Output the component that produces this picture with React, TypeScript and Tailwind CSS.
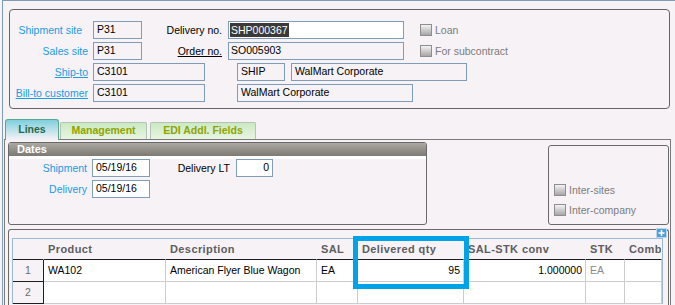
import React from "react";

type Child = { children?: React.ReactNode; className?: string };

function Label({ children, className = "" }: Child) {
  return <span className={`text-right leading-[18px] whitespace-nowrap ${className}`}>{children}</span>;
}

function Field({ children, className = "" }: Child) {
  return (
    <div className={`h-[18px] border border-[#7f9db9] flex items-center text-black whitespace-nowrap overflow-hidden ${className}`}>
      {children}
    </div>
  );
}

function Check({ label, className = "" }: { label: string; className?: string }) {
  return (
    <div className={`flex items-center gap-[3px] text-[#7c7c7c] ${className}`}>
      <span className="w-[12px] h-[12px] border border-[#8e8e8e] bg-linear-to-b from-[#f4f4f4] to-[#a6a6a6]" />
      <span className="leading-[12px]">{label}</span>
    </div>
  );
}

const head = "h-[21px] border-b border-r border-b-[#1e1e1e] border-r-transparent bg-[#f6f2f6] flex items-center pl-[4px] font-bold text-[11px] tracking-[0.4px] text-[#5e5e5e] whitespace-nowrap overflow-hidden relative after:absolute after:right-[-1px] after:top-[2px] after:bottom-0 after:w-px after:bg-[#1e1e1e]";
const num = "h-[22px] border-b border-r border-[#1e1e1e] bg-[#f6f2f6] flex items-center justify-center text-[#6a6a6a]";
const cell = "h-[22px] border-b border-r border-[#cccccc] bg-white flex items-center px-[4px] whitespace-nowrap overflow-hidden";

export default function App() {
  return (
    <div className="w-[675px] h-[305px] overflow-hidden bg-[#f6f2f6] font-['Liberation_Sans',Arial,sans-serif] text-[10.5px] relative">
      <div className="ml-[2px] w-[673px] h-full border-l border-t border-[#7f9db9] flex flex-col">
        {/* header panel */}
        <div className="mt-[8px] ml-[6px] w-[661px] h-[100px] shrink-0 border border-[#646464] rounded-[4px] pt-[11px] flex flex-col gap-[3px]">
          <div className="flex items-center h-[18px]">
            <Label className="w-[78px] pr-[6px] text-[#1a9be6]">Shipment site</Label>
            <Field className="ml-[5px] w-[49px] pl-[3px]">P31</Field>
            <Label className="w-[80px] text-black">Delivery no.</Label>
            <Field className="ml-[6px] w-[176px] bg-white pl-[1px]">
              <span className="bg-[#3a3a3a] text-white px-px leading-[14px]">SHP000367</span>
            </Field>
            <Check className="ml-[16px]" label="Loan" />
          </div>
          <div className="flex items-center h-[18px]">
            <Label className="w-[78px] text-[#1a9be6]">Sales site</Label>
            <Field className="ml-[5px] w-[49px] pl-[3px]">P31</Field>
            <Label className="w-[80px] text-black underline">Order no.</Label>
            <Field className="ml-[6px] w-[176px] pl-[2px]">SO005903</Field>
            <Check className="ml-[16px]" label="For subcontract" />
          </div>
          <div className="flex items-center h-[18px]">
            <Label className="w-[78px] text-[#1a9be6] underline">Ship-to</Label>
            <Field className="ml-[5px] w-[112px] pl-[3px]">C3101</Field>
            <Field className="ml-[32px] w-[48px] pl-[3px]">SHIP</Field>
            <Field className="ml-[6px] w-[176px] pl-[3px]">WalMart Corporate</Field>
          </div>
          <div className="flex items-center h-[18px]">
            <Label className="w-[78px] text-[#1a9be6] underline">Bill-to customer</Label>
            <Field className="ml-[5px] w-[112px] pl-[3px]">C3101</Field>
            <Field className="ml-[32px] w-[176px] pl-[3px]">WalMart Corporate</Field>
          </div>
        </div>

        {/* tabs */}
        <div className="mt-[10px] ml-[2px] h-[20px] shrink-0 flex items-end relative z-10">
          <div className="h-[21px] w-[54px] -mb-px border border-b-0 border-[#5aa88c] rounded-t-[3px] bg-linear-to-b from-[#7ccfdc] to-[#f6f2f6] flex items-center justify-center font-bold text-[#1d6b4c]">
            Lines
          </div>
          <div className="ml-[1px] h-[17px] w-[87px] border border-b-0 border-[#b4c4b4] rounded-t-[2px] bg-linear-to-b from-[#cbe9c2] to-[#e8f5e2] flex items-center justify-center font-bold text-[#8ea400]">
            Management
          </div>
          <div className="ml-[3px] h-[17px] w-[106px] border border-b-0 border-[#b4c4b4] rounded-t-[2px] bg-linear-to-b from-[#cbe9c2] to-[#e8f5e2] flex items-center justify-center font-bold text-[#8ea400]">
            EDI Addl. Fields
          </div>
        </div>

        {/* tab body */}
        <div className="ml-[1px] w-[667px] flex-1 border-l border-t border-r border-[#7a7a7a]">
          <div className="mt-[2px] ml-[3px] flex items-end">
            <div className="w-[419px] h-[83px] border border-[#6a6a6a] rounded-[3px] overflow-hidden flex flex-col">
              <div className="h-[13px] bg-linear-to-b from-[#aaaaa2] to-[#7e7875] text-white font-bold text-[11px] leading-[13px] pl-[8px]">
                Dates
              </div>
              <div className="h-[3px] bg-white" />
              <div className="flex flex-col gap-[3px]">
                <div className="flex items-center h-[18px]">
                  <Label className="w-[78px] text-[#1a9be6]">Shipment</Label>
                  <Field className="ml-[5px] w-[58px] bg-white pl-[3px]">05/19/16</Field>
                  <Label className="w-[80px] text-black">Delivery LT</Label>
                  <Field className="ml-[6px] w-[37px] bg-white justify-end pr-[3px]">0</Field>
                </div>
                <div className="flex items-center h-[18px]">
                  <Label className="w-[78px] text-[#1a9be6]">Delivery</Label>
                  <Field className="ml-[5px] w-[58px] bg-white pl-[3px]">05/19/16</Field>
                </div>
              </div>
            </div>
            <div className="ml-[121px] w-[121px] h-[80px] border border-[#6a6a6a] rounded-[3px] flex flex-col justify-end gap-[8px] pb-[8px] pl-[5px]">
              <Check label="Inter-sites" />
              <Check label="Inter-company" />
            </div>
          </div>

          {/* lines grid */}
          <div className="mt-[4px] ml-[3px] w-[661px] h-[90px] border-l border-t border-r border-[#6a6a6a] rounded-t-[3px] relative">
            <svg className="absolute right-[1px] top-[-2px]" width="11" height="10" viewBox="0 0 11 10">
              <rect x="0.5" y="0.5" width="10" height="9" fill="#4a9fdc" stroke="#bcd6ee" />
              <path d="M5.5 2v6M2.5 5h6" stroke="#fff" strokeWidth="1.6" />
            </svg>
            <div className="mt-[8px] ml-[3px] w-[651px] border-l border-t border-r border-[#9cbad6] grid grid-cols-[31px_122px_151px_41px_106px_122px_39px_1fr]">
              <div className={head} />
              <div className={head}>Product</div>
              <div className={head}>Description</div>
              <div className={head}>SAL</div>
              <div className={head}>Delivered qty</div>
              <div className={head}>SAL-STK conv</div>
              <div className={head}>STK</div>
              <div className={head}>Comb</div>

              <div className={num}>1</div>
              <div className={cell}>WA102</div>
              <div className={cell}>American Flyer Blue Wagon</div>
              <div className={cell}>EA</div>
              <div className={`${cell} justify-end pr-[3px]`}>95</div>
              <div className={`${cell} justify-end pr-[3px]`}>1.000000</div>
              <div className={`${cell} text-[#8a8a8a]`}>EA</div>
              <div className={cell} />

              <div className={num}>2</div>
              <div className={cell} />
              <div className={cell} />
              <div className={cell} />
              <div className={cell} />
              <div className={cell} />
              <div className={cell} />
              <div className={cell} />
            </div>
          </div>
        </div>
      </div>

      {/* highlight */}
      <div className="absolute left-[353px] top-[236px] w-[116px] h-[53px] border-[5px] border-[#00a3e8]" />
    </div>
  );
}
